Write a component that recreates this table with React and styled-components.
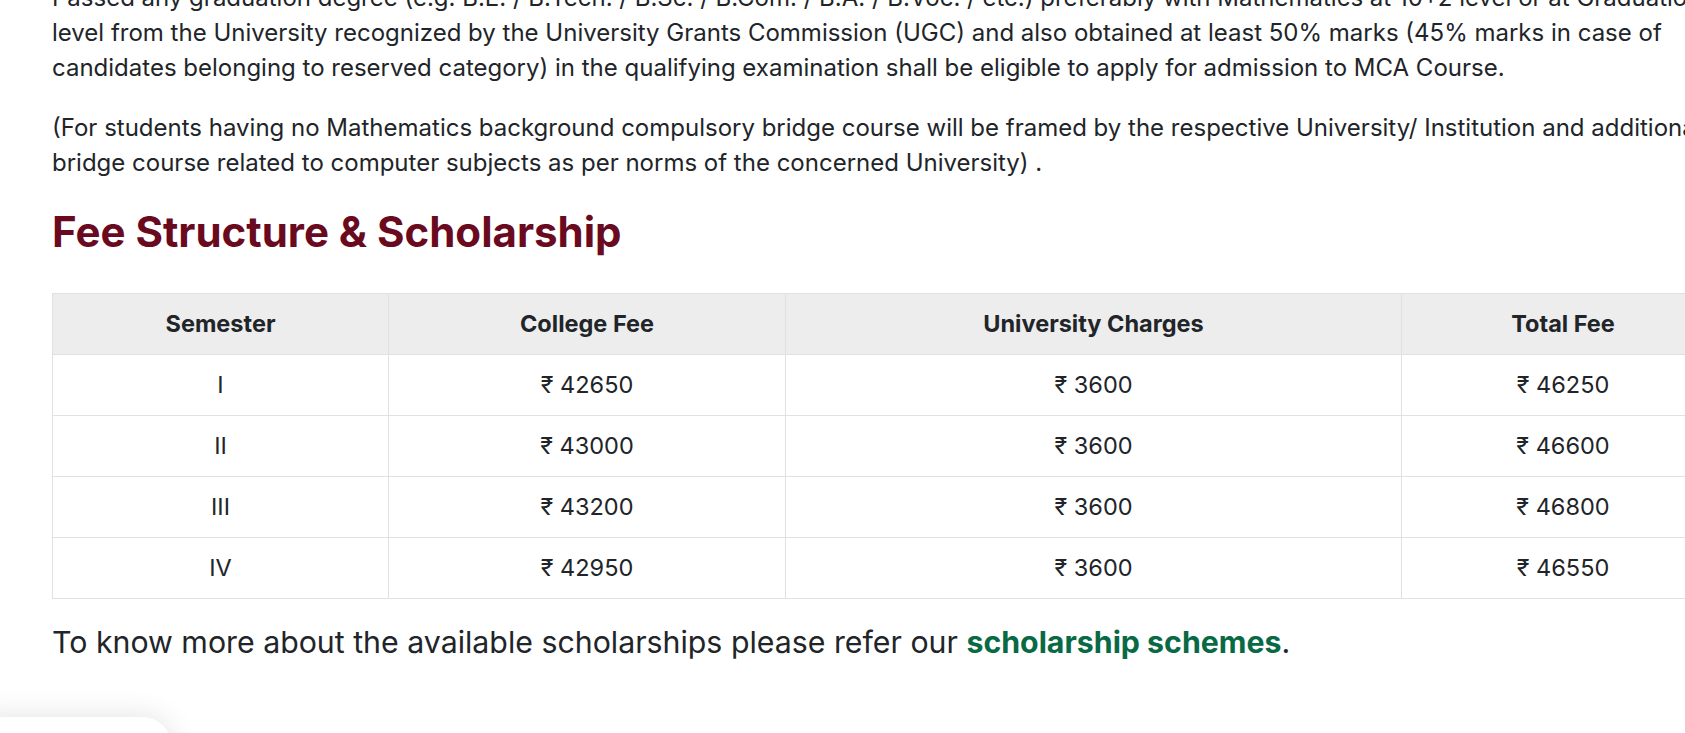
import React from "react";
import styled, { createGlobalStyle } from "styled-components";

const Global = createGlobalStyle`
  html, body {
    margin: 0;
    padding: 0;
    background: #ffffff;
    overflow: hidden;
  }
  body {
    font-family: Inter, "Noto Sans", "Liberation Sans", sans-serif;
    color: #212529;
  }
`;

const Page = styled.main`
  padding-left: 52px;
  width: 1672px;
`;

const Para = styled.p`
  margin: 0 0 25px;
  font-size: 24px;
  line-height: 35px;
  color: #212529;
  &:first-child {
    margin-top: -20px;
  }
`;

const Heading = styled.h2`
  margin: 28px 0 37px;
  font-size: 42px;
  line-height: 48px;
  font-weight: 700;
  color: #6a0a1f;
`;

const Table = styled.table`
  width: 1672px;
  border-collapse: collapse;
  table-layout: fixed;
  font-size: 23.5px;
`;

const Th = styled.th`
  background: #ededed;
  border: 1px solid #dee2e6;
  padding: 13px 15px;
  line-height: 34px;
  font-weight: 700;
  color: #212529;
  text-align: center;
`;

const Td = styled.td`
  border: 1px solid #dee2e6;
  padding: 13px 15px;
  line-height: 34px;
  color: #212529;
  text-align: center;
`;

const Note = styled.p`
  margin: 21px 0 0;
  font-size: 30.3px;
  line-height: 44px;
  color: #212529;
`;

const SchemeLink = styled.a`
  color: #086a45;
  font-weight: 700;
  text-decoration: none;
`;

const FloatCard = styled.div`
  position: fixed;
  left: -20px;
  top: 717px;
  width: 192px;
  height: 80px;
  background: #ffffff;
  border-radius: 0 30px 0 0;
  box-shadow: 0 0 30px rgba(0, 0, 0, 0.12);
`;

const cols = [336, 397, 616, 323];
const rows = [
  ["I", "42650", "3600", "46250"],
  ["II", "43000", "3600", "46600"],
  ["III", "43200", "3600", "46800"],
  ["IV", "42950", "3600", "46550"],
];

export default function App() {
  return (
    <>
      <Global />
      <Page>
        <Para>
          Passed any graduation degree (e.g. B.E. / B.Tech. / B.Sc. / B.Com. / B.A. / B.Voc. / etc.) preferably with Mathematics at 10+2 level or at Graduation level from the University recognized by the University Grants Commission (UGC) and also obtained at least 50% marks (45% marks in case of candidates belonging to reserved category) in the qualifying examination shall be eligible to apply for admission to MCA Course.
        </Para>
        <Para>
          (For students having no Mathematics background compulsory bridge course will be framed by the respective University/ Institution and additional bridge course related to computer subjects as per norms of the concerned University) .
        </Para>
        <Heading>Fee Structure &amp; Scholarship</Heading>
        <Table>
          <colgroup>
            {cols.map((w, i) => (
              <col key={i} style={{ width: w }} />
            ))}
          </colgroup>
          <thead>
            <tr>
              <Th>Semester</Th>
              <Th>College Fee</Th>
              <Th>University Charges</Th>
              <Th>Total Fee</Th>
            </tr>
          </thead>
          <tbody>
            {rows.map((r) => (
              <tr key={r[0]}>
                <Td>{r[0]}</Td>
                <Td>₹ {r[1]}</Td>
                <Td>₹ {r[2]}</Td>
                <Td>₹ {r[3]}</Td>
              </tr>
            ))}
          </tbody>
        </Table>
        <Note>
          To know more about the available scholarships please refer our{" "}
          <SchemeLink href="#">scholarship schemes</SchemeLink>.
        </Note>
      </Page>
      <FloatCard />
    </>
  );
}
